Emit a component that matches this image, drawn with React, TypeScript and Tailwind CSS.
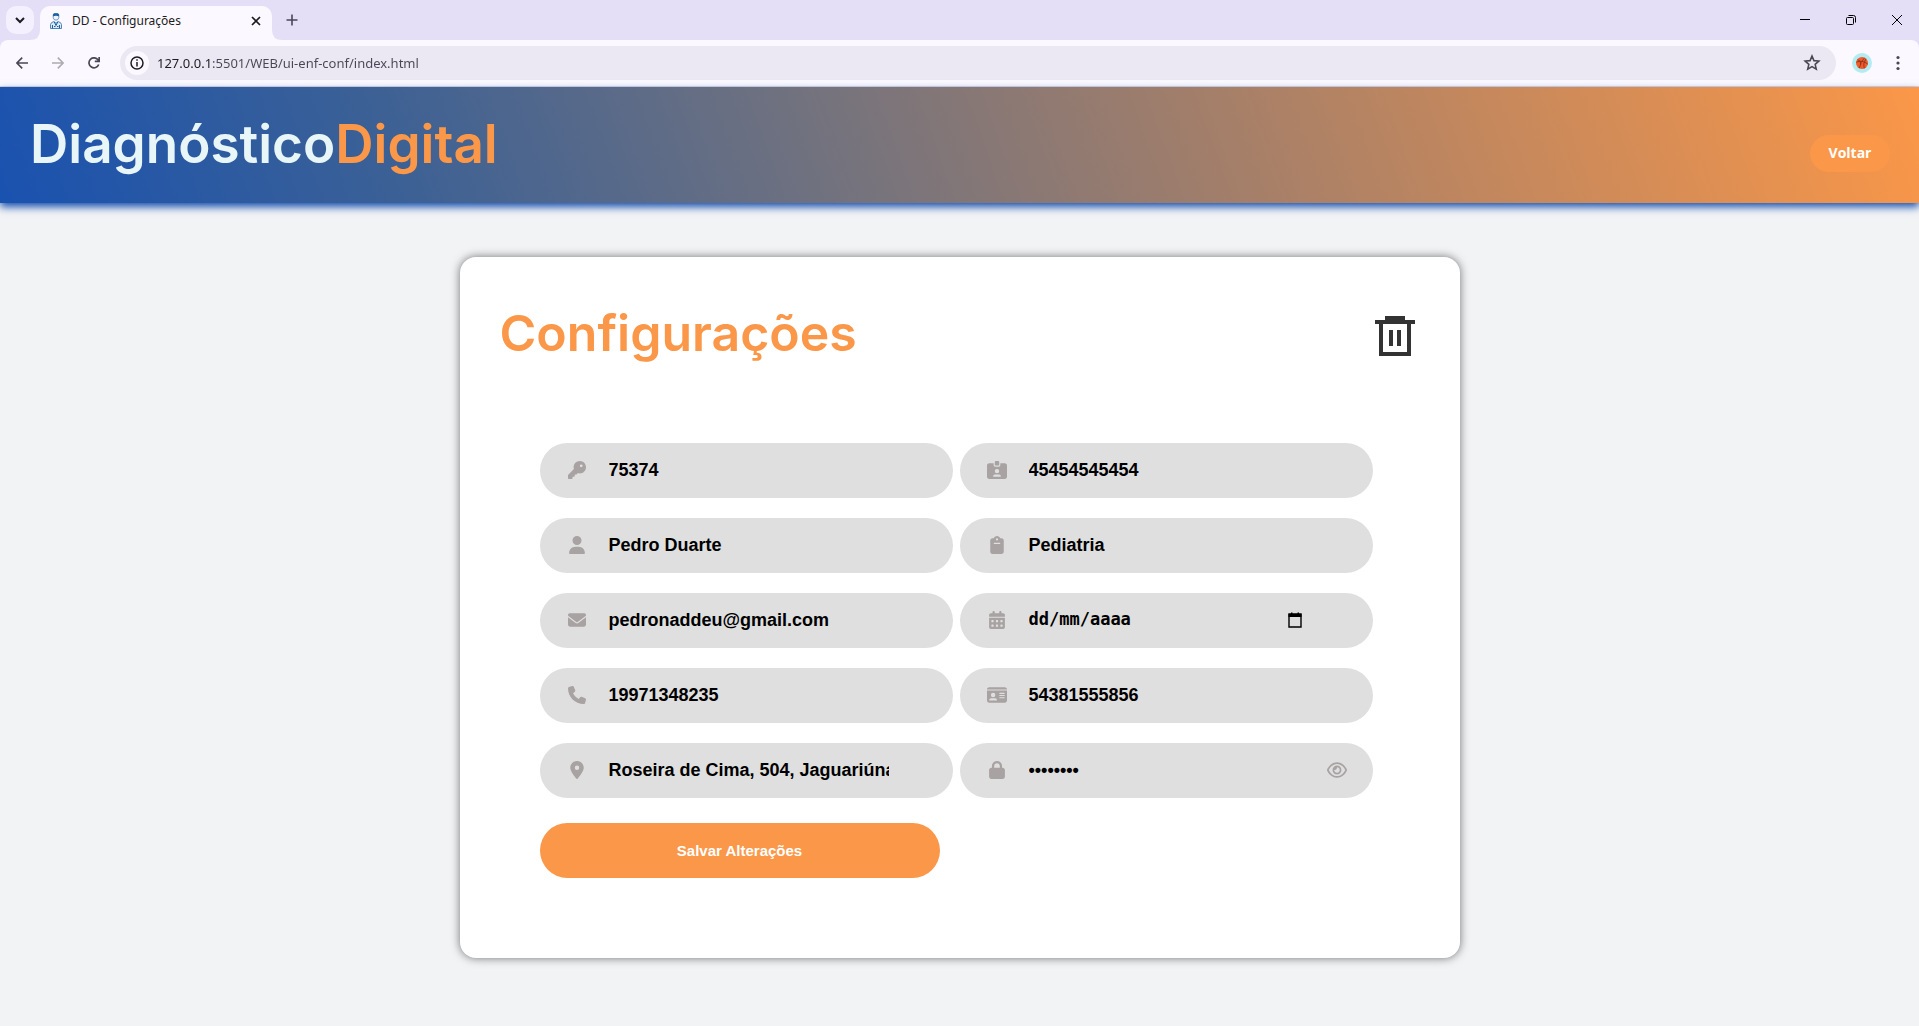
import React, { useState } from "react";
import {
  FaKey, FaIdCardClip, FaUser, FaClipboard, FaEnvelope, FaCalendarDays,
  FaPhone, FaIdCard, FaLocationDot, FaLock, FaRegEye,
} from "react-icons/fa6";
import type { IconType } from "react-icons";

type Field = { id: string; label: string; icon: IconType; size?: number; value: string; type?: string };

const fields: Field[] = [
  { id: "codigo", label: "Código", icon: FaKey, value: "75374" },
  { id: "coren", label: "Registro", icon: FaIdCardClip, size: 20, value: "45454545454" },
  { id: "nome", label: "Nome", icon: FaUser, value: "Pedro Duarte" },
  { id: "area", label: "Especialidade", icon: FaClipboard, value: "Pediatria" },
  { id: "email", label: "E-mail", icon: FaEnvelope, value: "pedronaddeu@gmail.com", type: "email" },
  { id: "nascimento", label: "Data de nascimento", icon: FaCalendarDays, value: "", type: "date" },
  { id: "telefone", label: "Telefone", icon: FaPhone, value: "19971348235", type: "tel" },
  { id: "cpf", label: "CPF", icon: FaIdCard, size: 20, value: "54381555856" },
  { id: "endereco", label: "Endereço", icon: FaLocationDot, value: "Roseira de Cima, 504, Jaguariúna" },
  { id: "senha", label: "Senha", icon: FaLock, value: "12345678", type: "password" },
];

function DoctorIcon() {
  return (
    <svg viewBox="0 0 16 16" className="size-4" fill="none">
      <path d="M5.2 4.5v-2.600Q5.200.3 8 .3t2.800 1.600v2.600Q10.500 7.200 8 7.200T5.200 4.500Z" fill="#eef4fa" stroke="#5b93c4" strokeWidth=".9" />
      <path d="M5 3.300V1.600Q5.400.2 8 .2t3 1.400v1.700Q8 2 5 3.300Z" fill="#1e62a0" />
      <path d="M2.500 15.500v-4Q2.800 9.300 6 8.500l2 1.800 2-1.800q3.200.8 3.500 3v4Z" fill="#dceaf6" stroke="#4a86bd" />
      <path d="m6.300 9 1.700 3.500L9.700 9M4.500 12v3.300M11.500 12v3.300M6 13.500h1.500m1.500 0h1.500" stroke="#1e62a0" />
    </svg>
  );
}

function ChromeBar() {
  return (
    <div className="bg-[#e4dff7] font-['Noto_Sans',sans-serif] text-[#1d1b20]">
      <div className="flex h-10 items-center">
        <button aria-label="Pesquisar guias" className="ml-1.5 mr-1.5 flex size-7 shrink-0 items-center justify-center rounded-[10px] bg-[#f4f0fe]">
          <svg viewBox="0 0 10 10" className="size-2.5" fill="none" stroke="currentColor" strokeWidth="2"><path d="m1 3 4 4 4-4" /></svg>
        </button>
        <div className="relative flex h-[34px] w-58 items-center self-end rounded-t-[10px] bg-[#fbf9ff] pb-1 pl-2 pr-2.5">
          <svg viewBox="0 0 10 10" className="absolute -left-2.5 bottom-0 size-2.5"><path d="M10 0v10H0Q10 10 10 0Z" fill="#fbf9ff" /></svg>
          <svg viewBox="0 0 10 10" className="absolute -right-2.5 bottom-0 size-2.5"><path d="M0 0v10h10Q0 10 0 0Z" fill="#fbf9ff" /></svg>
          <DoctorIcon />
          <span className="ml-2 flex-1 text-xs">DD - Configurações</span>
          <button aria-label="Fechar guia" className="flex size-3 items-center justify-center">
            <svg viewBox="0 0 10 10" className="size-2.5" fill="none" stroke="currentColor" strokeWidth="1.700"><path d="m1 1 8 8M9 1 1 9" /></svg>
          </button>
        </div>
        <button aria-label="Nova guia" className="ml-3.5 flex size-3 items-center justify-center">
          <svg viewBox="0 0 12 12" className="size-3" fill="none" stroke="#4a4658" strokeWidth="1.600"><path d="M6 .5v11M.5 6h11" /></svg>
        </button>
        <div className="ml-auto flex items-center gap-9 pr-[17px]">
          <button aria-label="Minimizar"><svg viewBox="0 0 10 10" className="size-2.5" stroke="#000"><path d="M0 4.500h10" /></svg></button>
          <button aria-label="Restaurar"><svg viewBox="0 0 10 10" className="size-2.5" fill="none" stroke="#000"><rect x=".5" y="2.500" width="7" height="7" rx="1" /><path d="M2.500.5h5Q9.500.5 9.500 2.500v5" /></svg></button>
          <button aria-label="Fechar"><svg viewBox="0 0 10 10" className="size-2.5" fill="none" stroke="#000"><path d="m0 0 10 10M10 0 0 10" /></svg></button>
        </div>
      </div>
      <div className="flex h-[47px] items-center rounded-t-lg border-b border-[#dcd9e6] bg-[#fbf9ff] pr-4">
        <div className="flex w-30 shrink-0 items-center gap-6 pl-4 text-[#4a4658]">
          <button aria-label="Voltar página"><svg viewBox="0 0 12 12" className="size-3" fill="none" stroke="currentColor" strokeWidth="1.600"><path d="M12 6H1M6.200.6.900 6l5.300 5.400" /></svg></button>
          <button aria-label="Avançar" className="text-[#adabb3]"><svg viewBox="0 0 12 12" className="size-3" fill="none" stroke="currentColor" strokeWidth="1.600"><path d="M0 6h11M5.800.6 11.100 6l-5.300 5.400" /></svg></button>
          <button aria-label="Recarregar"><svg viewBox="0 0 12 12" className="size-3" fill="none" stroke="currentColor" strokeWidth="1.700"><path d="M10.700 7.500A5 5 0 1 1 10 2.800L11 4.200M11.200 0v4.400H6.800" /></svg></button>
        </div>
        <div className="flex h-[34px] flex-1 items-center rounded-full bg-[#ebe8f3] pl-[5px] pr-[15px]">
          <button aria-label="Informações do site" className="flex size-6 items-center justify-center rounded-full bg-[#fbf9ff]">
            <svg viewBox="0 0 14 14" className="size-3.5" fill="none" stroke="currentColor" strokeWidth="1.500"><circle cx="7" cy="7" r="6" /><path d="M7 6v4.500M7 3.300v1.500" /></svg>
          </button>
          <label htmlFor="url" className="sr-only">Endereço da página</label>
          <input
            id="url"
            className="ml-2 h-6 flex-1 bg-[linear-gradient(90deg,#1d1b20_54px,#4a4653_54px)] bg-clip-text text-[13px] text-transparent outline-none"
            defaultValue="127.0.0.1:5501/WEB/ui-enf-conf/index.html"
          />
          <button aria-label="Favoritar">
            <svg viewBox="0 0 16 16" className="size-[18px]" fill="none" stroke="#4a4653" strokeWidth="1.400"><path d="m8 1.800 1.700 4.100 4.400.4-3.300 2.900 1 4.300L8 11.200l-3.800 2.300 1-4.300-3.300-2.900 4.400-.4Z" /></svg>
          </button>
        </div>
        <button aria-label="Perfil" className="ml-4 flex size-5 items-center justify-center rounded-full bg-[#b2ebf2]">
          <svg viewBox="0 0 12 12" className="size-3" fill="none"><circle cx="6" cy="6" r="6" fill="#f4592a" /><path d="M3.300 11.200Q4.500 5 8.500.8M.2 5.200Q6 2.500 11.800 7.200M1.500 2.500Q5 3.500 4.800 7.500M8.200 11.500Q6.500 7 9.800 1.800" stroke="#6d2f1c" strokeWidth=".7" /></svg>
        </button>
        <button aria-label="Menu" className="ml-6 mr-[3px]">
          <svg viewBox="0 0 4 16" className="h-4 w-1" fill="#4a4658"><circle cx="2" cy="2.500" r="1.600" /><circle cx="2" cy="8" r="1.600" /><circle cx="2" cy="13.500" r="1.600" /></svg>
        </button>
      </div>
    </div>
  );
}

function CalendarGlyph() {
  return (
    <svg viewBox="0 0 14 16" className="h-4 w-3.5" fill="none">
      <path d="M1 2h12v13H1Z" stroke="#000" strokeWidth="1.400" /><path d="M.5 2h13v3H.5ZM3 .5h1.500V2H3ZM9.500.5H11V2H9.500Z" fill="#000" />
    </svg>
  );
}

function FieldRow({ field }: { field: Field }) {
  const [value, setValue] = useState(field.value);
  const [shown, setShown] = useState(false);
  const Icon = field.icon;
  const password = field.type === "password";
  const date = field.type === "date";
  return (
    <div className="flex h-[55px] items-center rounded-full bg-[#dfdfdf] pb-px pl-[27px] pr-[26px]">
      <label htmlFor={field.id} className="flex w-[42px] shrink-0">
        <span className="flex w-5 items-center justify-center text-[#a8a2a2]"><Icon size={field.size ?? 18} aria-hidden /></span>
        <span className="sr-only">{field.label}</span>
      </label>
      <input
        id={field.id}
        type={date ? "text" : password && shown ? "text" : field.type ?? "text"}
        placeholder={date ? "dd/mm/aaaa" : undefined}
        value={value}
        onChange={(e) => setValue(e.target.value)}
        className={
          date
            ? "min-w-0 flex-1 bg-transparent font-['DejaVu_Sans_Mono',monospace] text-[17px] font-bold text-black outline-none placeholder:text-black"
            : "min-w-0 flex-1 bg-transparent font-['Liberation_Sans',sans-serif] text-lg font-bold text-black outline-none"
        }
      />
      {date ? (
        <div className="flex w-[59px] shrink-0">
          <button type="button" aria-label="Abrir calendário"><CalendarGlyph /></button>
        </div>
      ) : (
        <div className="flex w-[38px] shrink-0 justify-end text-[#a8a2a2]">
          {password && (
            <button type="button" aria-label="Mostrar senha" onClick={() => setShown(!shown)}><FaRegEye size={20} /></button>
          )}
        </div>
      )}
    </div>
  );
}

export default function App() {
  return (
    <div className="flex min-h-screen flex-col bg-[#f2f3f5]">
      <ChromeBar />
      <header className="flex h-29 items-center justify-between bg-[linear-gradient(70deg,#1a52b0,#3a6096_20%,#75737d_44%,#a57f69_64%,#fb9748)] pl-[30px] pr-[29px] shadow-[0_4px_8px_#1a52b0]">
        <h1 className="font-['Inter',sans-serif] text-[53px] font-semibold text-[#e8f6f7]">
          Diagnóstico<span className="text-[#fb9748]">Digital</span>
        </h1>
        <button className="mt-4 h-[37px] w-20 rounded-full bg-[#fb9748] font-['Open_Sans',sans-serif] text-sm font-bold text-white">Voltar</button>
      </header>
      <main className="flex flex-1 items-start justify-center pt-[54px]">
        <section className="w-full max-w-[1000px] rounded-2xl bg-white px-10 pb-20 pt-11 shadow-[0_0_10px_#00000088]">
          <div className="flex items-center justify-between">
            <h2 className="font-['Inter',sans-serif] text-[50px] leading-16 font-semibold text-[#fb9748]">Configurações</h2>
            <button aria-label="Excluir conta" className="mr-[5px] mt-1.5">
              <svg viewBox="0 0 20 20" className="size-10" fill="#333"><path d="M5 0h10v2h5v2h-2v16H2V4H0V2h5ZM4 4v14h12V4Z" fillRule="evenodd" /><path d="M7 7h2v8H7Zm4 0h2v8h-2Z" /></svg>
            </button>
          </div>
          <form className="mt-[78px] px-10 pr-[47px]" onSubmit={(e) => e.preventDefault()}>
            <div className="grid grid-cols-2 gap-x-[7px] gap-y-5">
              {fields.map((f) => <FieldRow key={f.id} field={f} />)}
            </div>
            <button type="submit" className="mt-[25px] h-[55px] w-full max-w-[400px] rounded-full bg-[#fb9748] pt-0.5 font-['Liberation_Sans',sans-serif] text-[15px] font-bold text-white">
              Salvar Alterações
            </button>
          </form>
        </section>
      </main>
    </div>
  );
}
